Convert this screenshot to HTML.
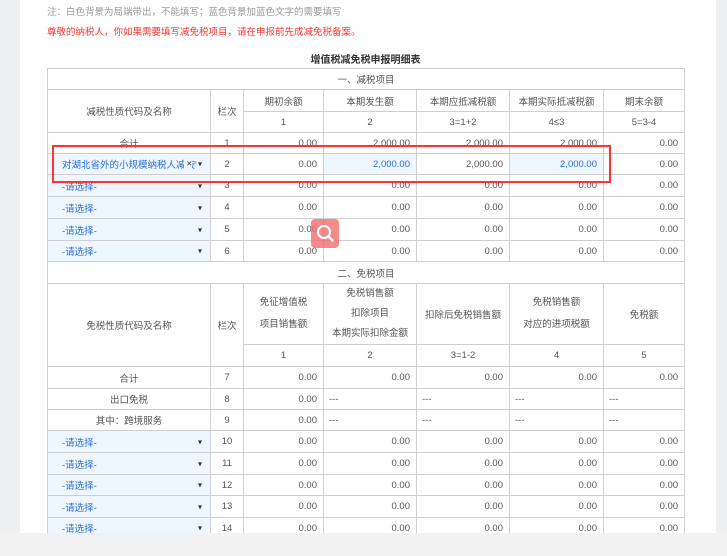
<!DOCTYPE html>
<html><head><meta charset="utf-8"><style>
*{margin:0;padding:0;box-sizing:border-box}
body{width:727px;height:556px;background:#eeeff1;position:relative;overflow:hidden;font-family:"Liberation Sans","Noto Sans CJK SC",sans-serif;font-size:9.5px;color:#444}
.panel{position:absolute;left:20px;top:0;width:696px;height:533px;background:#fff}
.bot{position:absolute;left:0;top:533px;width:727px;height:23px;background:#f2f2f2}
.note{position:absolute;left:47px;top:4px;color:#999;font-size:9.5px}
.warn{position:absolute;left:47px;top:24px;color:#f33;font-size:9.5px}
.title{position:absolute;left:47px;width:637px;top:51px;text-align:center;font-weight:bold;color:#333;font-size:10px}
table{position:absolute;left:47px;top:68px;width:637px;border-collapse:collapse;table-layout:fixed}
td{border:1px solid #cfcfcf;text-align:center;padding:0 5px;white-space:nowrap;overflow:hidden;color:#555}
td.r{text-align:right;padding-right:6px}
td.l{text-align:left}
td.sel{background:#eef6ff;color:#2a6fd6;text-align:left;padding-left:14px;position:relative}
td.sel:after{content:"▾";position:absolute;right:8px;color:#333;font-size:8px;top:50%;transform:translateY(-50%)}
.x{position:absolute;right:18px;top:50%;transform:translateY(-50%);color:#333;background:#eef6ff;padding-left:2px}
.hl{background:#eef6ff;color:#2a6fd6}
.red{position:absolute;left:52px;top:145px;width:559px;height:38px;border:2px solid #f33}
.srch{position:absolute;left:311px;top:219px;width:28px;height:29px;border-radius:4px;background:rgba(240,110,110,.8)}
</style></head><body>
<div class="panel"></div><div class="bot"></div>
<div class="note">注：白色背景为局端带出，不能填写；蓝色背景加蓝色文字的需要填写</div>
<div class="warn">尊敬的纳税人，你如果需要填写减免税项目，请在申报前先成减免税备案。</div>
<div class="title">增值税减免税申报明细表</div>
<table>
<colgroup><col style="width:163px"><col style="width:33px"><col style="width:80px"><col style="width:93px"><col style="width:93px"><col style="width:94px"><col style="width:81px"></colgroup>
<tr style="height:21px"><td colspan="7">一、减税项目</td></tr>
<tr style="height:22px"><td rowspan="2">减税性质代码及名称</td><td rowspan="2">栏次</td><td>期初余额</td><td>本期发生额</td><td>本期应抵减税额</td><td>本期实际抵减税额</td><td>期末余额</td></tr>
<tr style="height:21px"><td>1</td><td>2</td><td>3=1+2</td><td>4≤3</td><td>5=3-4</td></tr>
<tr style="height:21px"><td>合计</td><td>1</td><td class="r">0.00</td><td class="r">2,000.00</td><td class="r">2,000.00</td><td class="r">2,000.00</td><td class="r">0.00</td></tr>
<tr style="height:21px"><td class="sel">对湖北省外的小规模纳税人减按'<span class="x">×</span></td><td>2</td><td class="r">0.00</td><td class="r hl">2,000.00</td><td class="r">2,000.00</td><td class="r hl">2,000.00</td><td class="r">0.00</td></tr>
<tr style="height:22px"><td class="sel">-请选择-</td><td>3</td><td class="r">0.00</td><td class="r">0.00</td><td class="r">0.00</td><td class="r">0.00</td><td class="r">0.00</td></tr>
<tr style="height:22px"><td class="sel">-请选择-</td><td>4</td><td class="r">0.00</td><td class="r">0.00</td><td class="r">0.00</td><td class="r">0.00</td><td class="r">0.00</td></tr>
<tr style="height:22px"><td class="sel">-请选择-</td><td>5</td><td class="r">0.00</td><td class="r">0.00</td><td class="r">0.00</td><td class="r">0.00</td><td class="r">0.00</td></tr>
<tr style="height:21px"><td class="sel">-请选择-</td><td>6</td><td class="r">0.00</td><td class="r">0.00</td><td class="r">0.00</td><td class="r">0.00</td><td class="r">0.00</td></tr>
<tr style="height:22px"><td colspan="7">二、免税项目</td></tr>
<tr style="height:61px"><td rowspan="2">免税性质代码及名称</td><td rowspan="2">栏次</td><td style="line-height:22px">免征增值税<br>项目销售额</td><td style="line-height:20px">免税销售额<br>扣除项目<br>本期实际扣除金额</td><td>扣除后免税销售额</td><td style="line-height:22px">免税销售额<br>对应的进项税额</td><td>免税额</td></tr>
<tr style="height:22px"><td>1</td><td>2</td><td>3=1-2</td><td>4</td><td>5</td></tr>
<tr style="height:22px"><td>合计</td><td>7</td><td class="r">0.00</td><td class="r">0.00</td><td class="r">0.00</td><td class="r">0.00</td><td class="r">0.00</td></tr>
<tr style="height:21px"><td>出口免税</td><td>8</td><td class="r">0.00</td><td class="l">---</td><td class="l">---</td><td class="l">---</td><td class="l">---</td></tr>
<tr style="height:21px"><td>其中：跨境服务</td><td>9</td><td class="r">0.00</td><td class="l">---</td><td class="l">---</td><td class="l">---</td><td class="l">---</td></tr>
<tr style="height:22px"><td class="sel">-请选择-</td><td>10</td><td class="r">0.00</td><td class="r">0.00</td><td class="r">0.00</td><td class="r">0.00</td><td class="r">0.00</td></tr>
<tr style="height:22px"><td class="sel">-请选择-</td><td>11</td><td class="r">0.00</td><td class="r">0.00</td><td class="r">0.00</td><td class="r">0.00</td><td class="r">0.00</td></tr>
<tr style="height:21px"><td class="sel">-请选择-</td><td>12</td><td class="r">0.00</td><td class="r">0.00</td><td class="r">0.00</td><td class="r">0.00</td><td class="r">0.00</td></tr>
<tr style="height:22px"><td class="sel">-请选择-</td><td>13</td><td class="r">0.00</td><td class="r">0.00</td><td class="r">0.00</td><td class="r">0.00</td><td class="r">0.00</td></tr>
<tr style="height:21px"><td class="sel">-请选择-</td><td>14</td><td class="r">0.00</td><td class="r">0.00</td><td class="r">0.00</td><td class="r">0.00</td><td class="r">0.00</td></tr>
</table>
<div class="bot" style="z-index:2"></div>
<div class="red"></div>
<div class="srch"><svg width="28" height="29" viewBox="0 0 28 29"><circle cx="13" cy="13" r="6" fill="none" stroke="#fff" stroke-width="2"/><path d="M17.5 17.5 L21.5 21.5" stroke="#fff" stroke-width="2.5" stroke-linecap="round"/></svg></div>
</body></html>
